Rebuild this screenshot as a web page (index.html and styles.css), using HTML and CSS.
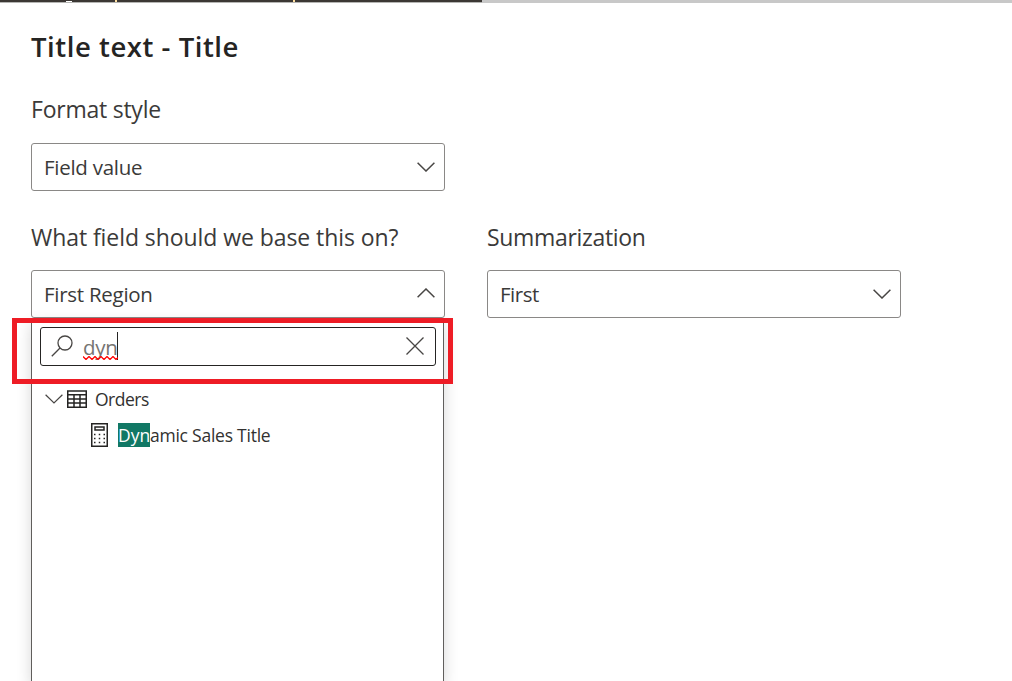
FILE: index.html
```html
<!DOCTYPE html>
<html lang="en">
<head>
<meta charset="utf-8">
<title>Title text - Title</title>
<link rel="stylesheet" href="styles.css">
</head>
<body>
<div class="strip"><div class="strip-dark"><i class="tail tail-g"></i><i class="tail tail-p"></i><i class="tail tail-q"></i></div></div>
<main class="dialog">
  <h1 class="title">Title text - Title</h1>
  <section class="field">
    <div class="label label-style">Format style</div>
    <div class="select"><span class="value">Field value</span><svg class="chevron" viewBox="0 0 18 10"><path d="M.6.7 9 9 17.4.7"/></svg></div>
  </section>
  <div class="row">
    <section class="field">
      <div class="label label-base">What field should we base this on?</div>
      <div class="select"><span class="value value-region">First Region</span><svg class="chevron chevron-up" viewBox="0 0 18 10"><path d="M.6 9.3 9 1l8.400 8.300"/></svg></div>
      <div class="panel">
        <div class="search">
          <svg class="magnifier" viewBox="0 0 22 22"><circle cx="14" cy="8" r="7"/><path d="M9 13 .8 21.200"/></svg>
          <span class="query"><span class="query-text">dyn</span><svg class="squiggle" viewBox="0 0 35 4"><path d="M0 .5 3 3.500 6 .5 9 3.500 12 .5l3 3L18 .5l3 3L24 .5l3 3L30 .5l3 3 2-2"/></svg></span>
          <svg class="clear" viewBox="0 0 18 18"><path d="m.5.5 17 17m0-17-17 17"/></svg>
        </div>
        <div class="tree">
          <div class="node">
            <svg class="expander" viewBox="0 0 18 10"><path d="M.6.7 9 9 17.400.7"/></svg>
            <svg class="table-icon" viewBox="0 0 20 18"><path d="M.75 1h18.500v16.250H.75zM.75 4.750h18.500M.75 9h18.500M.75 13h18.500M7 5v12M13 5v12"/></svg>
            <span class="name name-orders">Orders</span>
          </div>
          <div class="node leaf">
            <svg class="calc-icon" viewBox="0 0 17 24"><path d="M.75.75h15.500v22.500H.75zM4 4h9v3H4z"/><path class="keys" d="M3 11.500h1.500m3.250 0h1.500m3.250 0H14M3 15.500h1.500m3.250 0h1.500m3.250 0H14M3 19.500h1.500m3.250 0h1.500m3.250 0H14"/></svg>
            <span class="name"><mark>Dyn</mark>amic Sales Title</span>
          </div>
        </div>
        <div class="callout"></div>
      </div>
    </section>
    <section class="field">
      <div class="label label-sum">Summarization</div>
      <div class="select"><span class="value value-first">First</span><svg class="chevron" viewBox="0 0 18 10"><path d="M.6.7 9 9 17.400.7"/></svg></div>
    </section>
  </div>
</main>
</body>
</html>
```
FILE: styles.css
```css
* { box-sizing: border-box; }
body {
  margin: 0;
  height: 681px;
  overflow: hidden;
  background: #fff;
  color: #3b3a39;
  font-family: "Open Sans", "Noto Sans", sans-serif;
}
svg { display: block; flex: none; fill: none; stroke: #484644; stroke-width: 1.5; }
.strip { height: 3px; background: #c8c8c8; }
.strip-dark { position: relative; width: 482px; height: 3px; background: #3b3734; border-bottom: 1px solid #b5b5b3; }
.tail { position: absolute; top: 0; width: 2px; height: 2px; background: #ffe0a0; }
.tail-g { left: 66px; width: 6px; height: 1px; top: 1px; background: #fff; }
.tail-p { left: 115px; }
.tail-q { left: 293px; }
.dialog { height: 678px; padding: 24px 31px 0; }
.title { margin: 0; font-size: 27.500px; line-height: 39px; height: 40px; font-weight: 600; letter-spacing: .54px; color: #252423; white-space: nowrap; }
.field { width: 414px; }
.label { height: 32px; margin-bottom: 17px; font-size: 23px; line-height: 32px; letter-spacing: -.07px; white-space: nowrap; }
.label-style { line-height: 31px; letter-spacing: -.24px; }
.label-sum { letter-spacing: -.32px; }
.title + .field { padding-top: 27px; }
.select {
  display: flex;
  align-items: center;
  justify-content: space-between;
  height: 48px;
  padding: 0 9px 0 12px;
  border: 1px solid #8a8886;
  border-radius: 3px;
  background: #fff;
}
.value { font-size: 20.500px; line-height: 28px; letter-spacing: -.27px; white-space: nowrap; }
.value-first { letter-spacing: -.5px; }
.chevron { width: 18px; height: 10px; }
.chevron-up { margin-bottom: 2px; }
.row { display: flex; gap: 42px; padding-top: 30px; }
.panel {
  position: relative;
  width: 413px;
  height: 363px;
  padding: 9px 7px 0 8px;
  border: solid #605e5c;
  border-width: 0 1px;
  box-shadow: 0 6px 14px rgba(0, 0, 0, .16);
}
.search {
  display: flex;
  align-items: center;
  height: 39px;
  width: 396px;
  padding: 0 11px 2px 10px;
  border: 1px solid #252423;
  border-radius: 3px;
}
.magnifier { width: 22px; height: 22px; stroke-width: 1.300; }
.query { position: relative; margin-left: 10px; border-right: 1px solid #252423; height: 28px; width: 35px; }
.query-text { display: block; font-size: 20.500px; line-height: 30px; letter-spacing: -.3px; color: #767472; }
.squiggle { position: absolute; left: 0; bottom: 0; width: 35px; height: 4px; stroke: #f00; stroke-width: 1.300; }
.clear { width: 18px; height: 18px; margin-left: auto; stroke-width: 1.300; }
.tree { padding: 15px 0 0 5px; }
.node { display: flex; align-items: center; height: 36px; }
.expander { width: 18px; height: 10px; stroke-width: 1.200; }
.table-icon { width: 20px; height: 18px; margin: 0 8px 0 4px; stroke: #252423; }
.leaf { padding-left: 46px; }
.calc-icon { width: 17px; height: 24px; margin-right: 10px; stroke: #252423; }
.name { font-size: 17.500px; line-height: 24px; letter-spacing: -.24px; color: #323130; white-space: nowrap; }
.name-orders { letter-spacing: -.5px; }
mark { display: inline-block; width: 32px; background: #117865; color: #fff; letter-spacing: 0; }
.callout { position: absolute; left: -20px; top: 0; width: 441px; height: 66px; border: 5px solid #ee1c25; }
```
